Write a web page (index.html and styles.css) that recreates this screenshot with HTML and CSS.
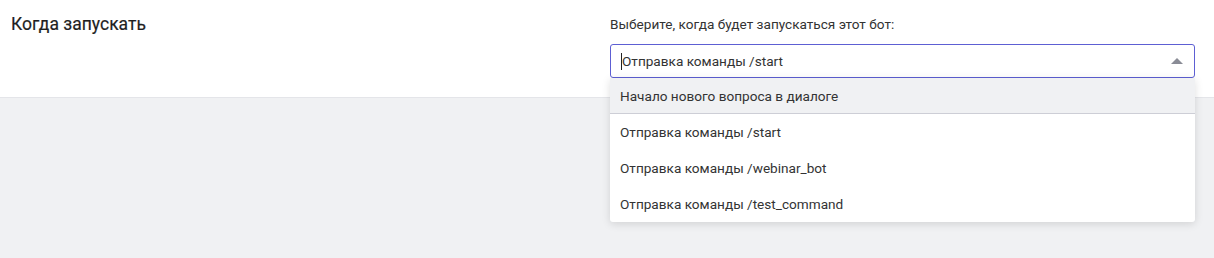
FILE: index.html
```html
<!DOCTYPE html>
<html>
<head>
    <title>Когда запускать</title>
    <meta charset="UTF-8">
    <link rel="stylesheet" href="styles.css">
</head>
<body>
    <div class="section">
        <h3 class="section-title">Когда запускать</h3>
        <div class="field">
            <label class="field-label">Выберите, когда будет запускаться этот бот:</label>
            <div class="select">
                <div class="select-box">
                    <span class="caret"></span>
                    <span class="select-value">Отправка команды /start</span>
                    <span class="arrow"></span>
                </div>
                <ul class="options">
                    <li class="option option-active">Начало нового вопроса в диалоге</li>
                    <li class="option">Отправка команды /start</li>
                    <li class="option">Отправка команды /webinar_bot</li>
                    <li class="option">Отправка команды /test_command</li>
                </ul>
            </div>
        </div>
    </div>
    <div class="page-bottom"></div>
</body>
</html>
```

FILE: styles.css
```css
body {
    margin: 0;
    font-family: Roboto, "Noto Sans", sans-serif;
    background: #f0f1f3;
    color: #2b2b2b;
}
.section {
    background: white;
    height: 98px;
    border-bottom: 1px solid #e4e5e9;
    box-sizing: border-box;
    display: grid;
    grid-template-columns: 599px 1fr;
    padding: 14px 19px 0 11px;
    position: relative;
    z-index: 1;
}
.page-bottom {
    height: 160px;
}
.section-title {
    margin: 0;
    font-size: 17.5px;
    font-weight: 400;
    line-height: 20px;
    color: #1f1f1f;
    -webkit-text-stroke: 0.2px #1f1f1f;
}
.field-label {
    display: block;
    font-size: 13.6px;
    line-height: 20px;
    color: #333;
    margin-bottom: 10px;
}
.select {
    position: relative;
}
.select-box {
    height: 34px;
    box-sizing: border-box;
    border: 1px solid #5d5fd3;
    border-radius: 3px;
    display: flex;
    align-items: center;
    padding: 0 10px;
    font-size: 13.6px;
    color: #333;
}
.caret {
    width: 1px;
    height: 17px;
    background: #222;
}
.select-value {
    flex: 1;
}
.arrow {
    width: 0;
    height: 0;
    border-left: 6px solid transparent;
    border-right: 6px solid transparent;
    border-bottom: 6px solid #8a8c96;
    margin-right: 1px;
}
.options {
    position: absolute;
    top: 34px;
    left: 0;
    right: 0;
    margin: 0;
    padding: 0;
    list-style: none;
    background: white;
    border-radius: 0 0 3px 3px;
    box-shadow: 0 2px 8px rgba(0,0,0,0.13);
}
.option {
    height: 36px;
    display: flex;
    align-items: center;
    padding: 0 10px;
    font-size: 13.6px;
    color: #333;
}
.option-active {
    background: #f0f1f3;
    border-bottom: 1px solid #cdced6;
    box-sizing: border-box;
}
```
